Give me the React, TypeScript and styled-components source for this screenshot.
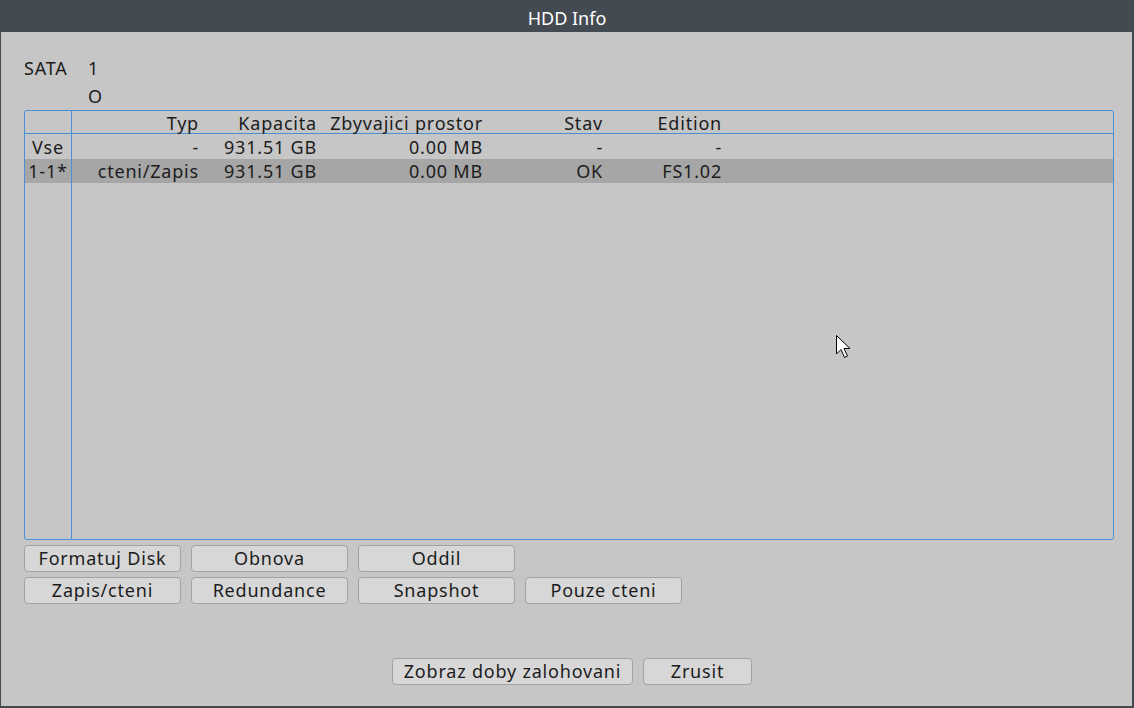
import React from "react";
import styled, { createGlobalStyle } from "styled-components";

const BLUE = "#4a90d9";
const DARK = "#434a52";

const GlobalStyle = createGlobalStyle`
  html, body {
    margin: 0;
    padding: 0;
    background: ${DARK};
  }
  body {
    font-family: "Noto Sans", "Open Sans", sans-serif;
  }
`;

const Window = styled.div`
  position: relative;
  width: 1134px;
  height: 708px;
  box-sizing: border-box;
  background: #c6c6c6;
  border-left: 1px solid ${DARK};
  border-right: 2px solid ${DARK};
  border-bottom: 2px solid ${DARK};
  display: flex;
  flex-direction: column;
  color: #1c1c1c;
  font-size: 18px;
  letter-spacing: 0.8px;
  overflow: hidden;
`;

const TitleBar = styled.div`
  height: 32px;
  margin-left: -1px;
  margin-right: -2px;
  background: ${DARK};
  color: #ffffff;
  display: flex;
  align-items: center;
  justify-content: center;
  font-size: 18px;
  letter-spacing: 0;
  padding-top: 4px;
  box-sizing: border-box;
`;

const Content = styled.div`
  padding: 22px 0 0 23px;
  display: flex;
  flex-direction: column;
`;

const SataGrid = styled.div`
  display: grid;
  grid-template-columns: 64px auto;
  grid-auto-rows: 28px;
  align-items: center;
  line-height: 28px;
`;

const Table = styled.div`
  width: 1090px;
  height: 430px;
  box-sizing: border-box;
  border: 1px solid ${BLUE};
  border-radius: 3px;
  display: flex;
  flex-direction: column;
`;

const Row = styled.div<{ $head?: boolean; $selected?: boolean; $fill?: boolean }>`
  display: grid;
  grid-template-columns: 47px 126px 118px 166px 120px 119px 1fr;
  height: ${(p) => (p.$head ? "22px" : "24px")};
  line-height: ${(p) => (p.$head ? "24px" : "24px")};
  background: ${(p) => (p.$selected ? "#a6a6a6" : "transparent")};
  border-bottom: ${(p) => (p.$head ? `1px solid ${BLUE}` : "none")};
  flex: ${(p) => (p.$fill ? "1" : "none")};
`;

const IndexCell = styled.div`
  border-right: 1px solid ${BLUE};
  text-align: center;
`;

const Cell = styled.div`
  text-align: right;
  white-space: nowrap;
  margin-right: -1px;
`;

const Spacer = styled.div`
  height: 1px;
  display: grid;
  grid-template-columns: 47px 1fr;
`;

const ButtonGrid = styled.div`
  display: flex;
  flex-direction: column;
  gap: 5px;
  margin-top: 5px;
`;

const ButtonRow = styled.div`
  display: flex;
  gap: 10px;
`;

const Button = styled.button<{ $w?: number }>`
  width: ${(p) => p.$w ?? 157}px;
  height: 27px;
  box-sizing: border-box;
  background: #d7d7d7;
  border: 1px solid #a3a3a3;
  border-radius: 4px;
  font-family: inherit;
  font-size: 18px;
  letter-spacing: 0.8px;
  color: #1c1c1c;
  padding: 0;
  line-height: 25px;
  white-space: nowrap;
`;

const Footer = styled.div`
  display: flex;
  gap: 10px;
  margin-top: 54px;
  padding-left: 368px;
`;

const Cursor = styled.svg`
  position: absolute;
  left: 834px;
  top: 334px;
`;

const columns = ["Typ", "Kapacita", "Zbyvajici prostor", "Stav", "Edition"];

const rows = [
  { id: "Vse", values: ["-", "931.51 GB", "0.00 MB", "-", "-"] },
  { id: "1-1*", values: ["cteni/Zapis", "931.51 GB", "0.00 MB", "OK", "FS1.02"], selected: true },
];

export default function App() {
  return (
    <>
      <GlobalStyle />
      <Window>
        <TitleBar>HDD Info</TitleBar>
        <Content>
          <SataGrid>
            <span>SATA</span>
            <span>1</span>
            <span />
            <span>O</span>
          </SataGrid>
          <Table>
            <Row $head>
              <IndexCell />
              {columns.map((c) => (
                <Cell key={c}>{c}</Cell>
              ))}
            </Row>
            <Spacer>
              <IndexCell />
            </Spacer>
            {rows.map((r) => (
              <Row key={r.id} $selected={r.selected}>
                <IndexCell>{r.id}</IndexCell>
                {r.values.map((v, i) => (
                  <Cell key={i}>{v}</Cell>
                ))}
              </Row>
            ))}
            <Row $fill>
              <IndexCell />
            </Row>
          </Table>
          <ButtonGrid>
            <ButtonRow>
              <Button>Formatuj Disk</Button>
              <Button>Obnova</Button>
              <Button>Oddil</Button>
            </ButtonRow>
            <ButtonRow>
              <Button>Zapis/cteni</Button>
              <Button>Redundance</Button>
              <Button>Snapshot</Button>
              <Button>Pouze cteni</Button>
            </ButtonRow>
          </ButtonGrid>
          <Footer>
            <Button $w={241}>Zobraz doby zalohovani</Button>
            <Button $w={109}>Zrusit</Button>
          </Footer>
        </Content>
        <Cursor width="18" height="26" viewBox="0 0 18 26">
          <path
            d="M1.5 1.5 L1.5 20 L6 15.5 L9.5 23.5 L12.5 22 L9 14.5 L15 14.5 Z"
            fill="#ffffff"
            stroke="#000000"
            strokeWidth="1"
            strokeLinejoin="round"
          />
        </Cursor>
      </Window>
    </>
  );
}
